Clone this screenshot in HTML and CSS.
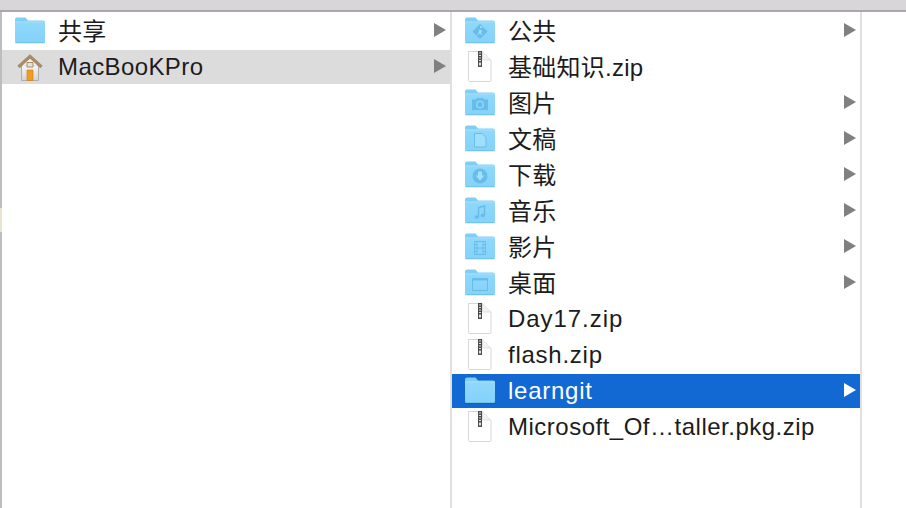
FILE: index.html
```html
<!DOCTYPE html>
<html lang="zh-CN">
<head>
    <meta charset="UTF-8">
    <title>Finder</title>
    <link rel="stylesheet" href="styles.css">
</head>
<body>
    <svg class="sprite" xmlns="http://www.w3.org/2000/svg">
        <defs>
            <linearGradient id="front" x1="0" y1="0" x2="0" y2="1">
                <stop offset="0" stop-color="#8fd8fb"/>
                <stop offset="1" stop-color="#84d2fa"/>
            </linearGradient>
            <linearGradient id="wall" x1="0" y1="0" x2="0" y2="1">
                <stop offset="0" stop-color="#f8f8f8"/>
                <stop offset="1" stop-color="#d4d4d4"/>
            </linearGradient>
            <symbol id="folder" viewBox="0 0 30 34">
                <path d="M0 28h30v1a1 1 0 0 1-1 1H1a1 1 0 0 1-1-1z" fill="#000" opacity=".08"/>
                <path d="M0 5.500a2 2 0 0 1 2-2h8.500l2.500 3h15a2 2 0 0 1 2 2V12H0z" fill="#80cdf5"/>
                <path d="M0 8.500a1 1 0 0 1 1-1h28a1 1 0 0 1 1 1V27a2 2 0 0 1-2 2H2a2 2 0 0 1-2-2z" fill="url(#front)"/>
                <path d="M0 7.500h30v1H0z" fill="#a4e0fc"/>
                <path d="M0 28h30a2 2 0 0 1-2 1H2a2 2 0 0 1-2-1z" fill="#74c3ef"/>
            </symbol>
            <symbol id="zipfile" viewBox="0 0 30 34">
                <path d="M3.500 1.500h14l8.500 8.500v20.500a1 1 0 0 1-1 1H4.500a1 1 0 0 1-1-1z" fill="#fff" stroke="#d8d8d8"/>
                <path d="M17.500 1.500V9a1 1 0 0 0 1 1H26" fill="#f2f2f2" stroke="#e0e0e0"/>
                <path d="M13 1h4v16h-4z" fill="#4a4a4a"/>
                <path d="M14 2.500h2v1h-2zM14 5h2v1h-2zM14 7.500h2v1h-2zM14 10h2v1h-2zM14 12.500h2v3h-2z" fill="#e4e4e4"/>
            </symbol>
            <symbol id="home" viewBox="0 0 30 34">
                <path d="M6.500 15h17v15.500h-17z" fill="url(#wall)" stroke="#aeaeae"/>
                <path d="M3.500 17 15 6.500 26.500 17" fill="none" stroke="#a98b68" stroke-width="3.400"/>
                <path d="M15 9 7.500 15.500h15z" fill="#f2f2f2"/>
                <path d="M12 12.500h6v4.500h-6z" fill="#e2e2e2" stroke="#a98b68"/>
                <path d="M12 20h6v10.500h-6z" fill="#f39a1f" stroke="#c97c12" stroke-width=".6"/>
            </symbol>
        </defs>
    </svg>

    <div class="titlebar"></div>
    <div class="browser">
        <div class="edge"></div>

        <ul class="column column-first">
            <li class="row">
                <svg class="icon"><use href="#folder"/></svg>
                <span class="name name-cjk">共享</span>
                <i class="arrow"></i>
            </li>
            <li class="row row-hover">
                <svg class="icon"><use href="#home"/></svg>
                <span class="name">MacBooKPro</span>
                <i class="arrow"></i>
            </li>
        </ul>

        <ul class="column column-second">
            <li class="row">
                <svg class="icon" viewBox="0 0 30 34">
                    <use href="#folder"/>
                    <path d="M15 10l7.500 7.500L15 25l-7.500-7.500z" fill="#68bcea"/>
                    <path d="M15 13a1 1 0 1 1 0 .1zM13 16.500l2-1 1.500 1 1.500 1-1.500-.3-.5 1.800 1.500 2h-1.200l-1.500-2-1.300 2h-1l1.500-3 .2-2z" fill="#a5e0fb"/>
                </svg>
                <span class="name name-cjk">公共</span>
                <i class="arrow"></i>
            </li>
            <li class="row">
                <svg class="icon"><use href="#zipfile"/></svg>
                <span class="name name-cjk">基础知识.zip</span>
            </li>
            <li class="row">
                <svg class="icon" viewBox="0 0 30 34">
                    <use href="#folder"/>
                    <path d="M7 13.500h4l1-1.500h6l1 1.500h4V24H7z" fill="#68bcea"/>
                    <circle cx="15" cy="18.500" r="4" fill="#8ad5fa"/>
                    <circle cx="15" cy="18.500" r="2.500" fill="#68bcea"/>
                </svg>
                <span class="name name-cjk">图片</span>
                <i class="arrow"></i>
            </li>
            <li class="row">
                <svg class="icon" viewBox="0 0 30 34">
                    <use href="#folder"/>
                    <path d="M9.500 11.500H17l4 4v9.500H9.500z" fill="#9fdffc" stroke="#68bcea"/>
                </svg>
                <span class="name name-cjk">文稿</span>
                <i class="arrow"></i>
            </li>
            <li class="row">
                <svg class="icon" viewBox="0 0 30 34">
                    <use href="#folder"/>
                    <circle cx="15" cy="18" r="7.500" fill="#68bcea"/>
                    <path d="M13 13.500h4v4h2.500L15 22.500l-4.500-5H13z" fill="#a5e0fb"/>
                </svg>
                <span class="name name-cjk">下载</span>
                <i class="arrow"></i>
            </li>
            <li class="row">
                <svg class="icon" viewBox="0 0 30 34">
                    <use href="#folder"/>
                    <path d="M13.500 13.500l6-1.500v9M13.500 13.500V23" fill="none" stroke="#68bcea" stroke-width="1.500"/>
                    <ellipse cx="11.800" cy="23" rx="2.200" ry="1.700" fill="#68bcea"/>
                    <ellipse cx="17.800" cy="21.500" rx="2.200" ry="1.700" fill="#68bcea"/>
                </svg>
                <span class="name name-cjk">音乐</span>
                <i class="arrow"></i>
            </li>
            <li class="row">
                <svg class="icon" viewBox="0 0 30 34">
                    <use href="#folder"/>
                    <path d="M9.500 11.500h11v13h-11zM12 11.500v13M18 11.500v13M12 18h6M9.500 14.500H12M9.500 18H12M9.500 21.500H12M18 14.500h2.500M18 18h2.500M18 21.500h2.500" fill="none" stroke="#68bcea"/>
                </svg>
                <span class="name name-cjk">影片</span>
                <i class="arrow"></i>
            </li>
            <li class="row">
                <svg class="icon" viewBox="0 0 30 34">
                    <use href="#folder"/>
                    <path d="M7.500 12.500h15v12h-15z" fill="none" stroke="#68bcea"/>
                    <path d="M7.500 12.500h15v2h-15z" fill="#68bcea"/>
                </svg>
                <span class="name name-cjk">桌面</span>
                <i class="arrow"></i>
            </li>
            <li class="row">
                <svg class="icon"><use href="#zipfile"/></svg>
                <span class="name name-digits">Day17.zip</span>
            </li>
            <li class="row">
                <svg class="icon"><use href="#zipfile"/></svg>
                <span class="name name-wide">flash.zip</span>
            </li>
            <li class="row row-selected">
                <svg class="icon"><use href="#folder"/></svg>
                <span class="name name-wide">learngit</span>
                <i class="arrow"></i>
            </li>
            <li class="row">
                <svg class="icon"><use href="#zipfile"/></svg>
                <span class="name name-long">Microsoft_Of…taller.pkg.zip</span>
            </li>
        </ul>

        <div class="column-empty"></div>
    </div>
</body>
</html>
```

FILE: styles.css
```css
html, body {
    margin: 0;
    padding: 0;
    height: 508px;
    overflow: hidden;
    background: #ffffff;
}
.sprite {
    display: block;
    width: 0;
    height: 0;
}
.titlebar {
    height: 10px;
    background: #d8d6d8;
    border-bottom: 2px solid #a9a8a9;
}
.browser {
    display: flex;
    height: 496px;
}
.edge {
    width: 2px;
    background: linear-gradient(#bdbdbd 196px, #e9e3d3 196px, #e9e3d3 220px, #bdbdbd 220px);
}
.column {
    list-style: none;
    margin: 0;
    padding: 2px 0 0;
    display: flex;
    flex-direction: column;
    gap: 2px;
    border-right: 2px solid #e0e0e0;
    font-family: "Liberation Sans", "Noto Sans CJK SC", sans-serif;
    font-size: 24px;
    line-height: 34px;
    color: #1c1c1c;
}
.column-first {
    width: 448px;
}
.column-second {
    width: 408px;
}
.column-empty {
    flex: 1;
}
.row {
    display: flex;
    align-items: center;
    height: 34px;
    padding: 0 4px 0 13px;
    white-space: nowrap;
}
.row-hover {
    background: #dcdcdc;
}
.row-selected {
    background: #1269d3;
    color: #ffffff;
}
.icon {
    flex: none;
    width: 30px;
    height: 34px;
}
.name {
    flex: 1;
    margin-left: 13px;
    letter-spacing: 0.4px;
}
.name-cjk {
    margin-top: 2px;
    letter-spacing: 0.25px;
}
.name-wide {
    letter-spacing: 0.75px;
}
.name-digits {
    letter-spacing: 0.95px;
}
.name-long {
    letter-spacing: 0.5px;
}
.arrow {
    flex: none;
    width: 0;
    height: 0;
    margin-bottom: 2px;
    border-left: 12px solid #808080;
    border-top: 7px solid transparent;
    border-bottom: 7px solid transparent;
}
.row-selected .arrow {
    border-left-color: #ffffff;
}
```
